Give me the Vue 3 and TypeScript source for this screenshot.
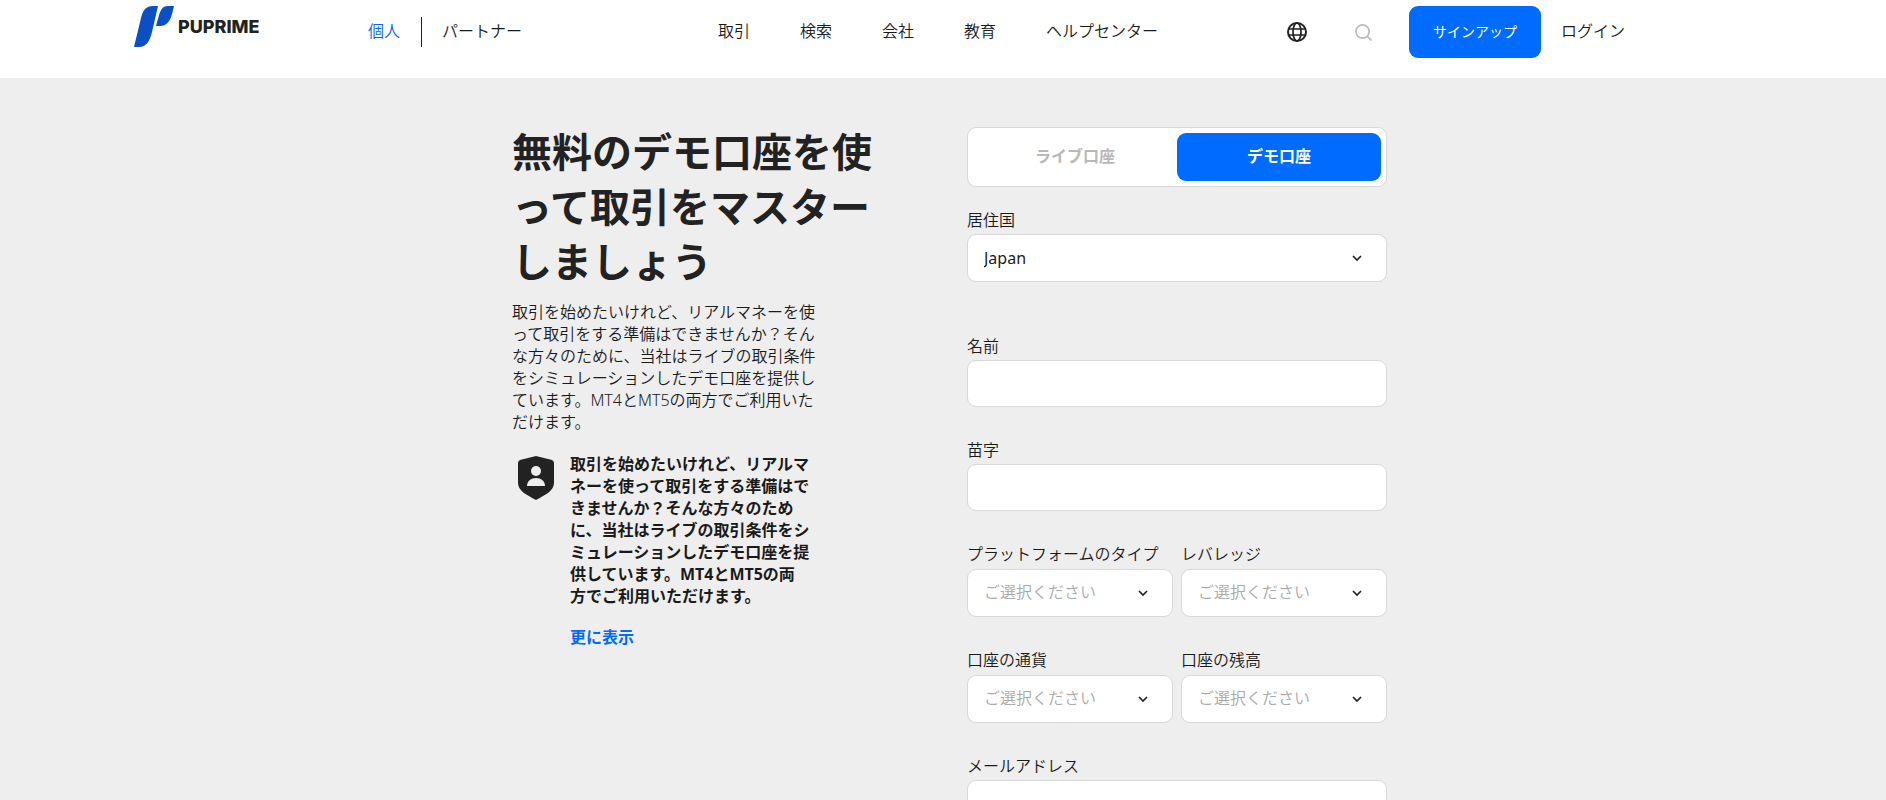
<script setup lang="ts">
import { ref } from 'vue'

interface Choice {
  id: string
  label: string
  options: string[]
}

const menu: string[] = ['取引', '検索', '会社', '教育', 'ヘルプセンター']

const names: { id: string; label: string }[] = [
  { id: 'first-name', label: '名前' },
  { id: 'last-name', label: '苗字' },
]

const choices: Choice[] = [
  { id: 'platform', label: 'プラットフォームのタイプ', options: ['MT4', 'MT5'] },
  { id: 'leverage', label: 'レバレッジ', options: ['100:1', '500:1'] },
  { id: 'currency', label: '口座の通貨', options: ['JPY', 'USD'] },
  { id: 'balance', label: '口座の残高', options: ['10000', '50000'] },
]

const account = ref<'live' | 'demo'>('demo')
const country = ref('Japan')
</script>

<template>
  <div class="page">
    <header class="header">
      <a class="logo" href="#" aria-label="PUPRIME">
        <svg class="logo-mark" viewBox="0 0 40 41" aria-hidden="true">
          <path d="M19 0H24L18 26C16 35 12 41 5 41H0L7 12C9 4 12 0 19 0Z" fill="#0a4fc4" />
          <path d="M34 0H40L38 8C36 16 32 20 26 20H22L25 9C27 3 29 0 34 0Z" fill="#0a4fc4" />
        </svg>
        <span class="logo-name">PUPRIME</span>
      </a>
      <div class="audience">
        <a class="active" href="#">個人</a>
        <a class="partner" href="#">パートナー</a>
      </div>
      <nav class="menu">
        <a v-for="item in menu" :key="item" href="#">{{ item }}</a>
      </nav>
      <div class="tools">
        <button class="icon-button" type="button" aria-label="言語">
          <svg class="globe" viewBox="0 0 20 20" fill="none" stroke="#222" stroke-width="2" aria-hidden="true">
            <circle cx="10" cy="10" r="9" />
            <ellipse cx="10" cy="10" rx="4" ry="9" stroke-width="1.7" />
            <path d="M1.5 7H18.5M1.5 13H18.5" stroke-width="1.7" />
          </svg>
        </button>
        <button class="icon-button" type="button" aria-label="サイト内検索">
          <svg class="search" viewBox="0 0 18 18" fill="none" stroke="#bbb" stroke-width="1.8" aria-hidden="true">
            <circle cx="8" cy="8" r="7" />
            <path d="M13 13L17.5 17.5" />
          </svg>
        </button>
      </div>
      <button class="signup" type="button">サインアップ</button>
      <a class="login" href="#">ログイン</a>
    </header>

    <main class="content">
      <section class="intro">
        <h1>無料のデモ口座を使って取引をマスターしましょう</h1>
        <p class="lead">取引を始めたいけれど、リアルマネーを使って取引をする準備はできませんか？そんな方々のために、当社はライブの取引条件をシミュレーションしたデモ口座を提供しています。MT4とMT5の両方でご利用いただけます。</p>
        <div class="feature">
          <svg class="shield" viewBox="0 0 36 44" aria-hidden="true">
            <path d="M18 0L34 4Q36 5 36 7V27C36 35 27 39 18 44C9 39 0 35 0 27V7Q0 5 2 4Z" fill="#222" />
            <circle cx="18" cy="15" r="5" fill="#eee" />
            <path d="M9 30C9 25 13 22 18 22S27 25 27 30Z" fill="#eee" />
          </svg>
          <div class="feature-body">
            <p>取引を始めたいけれど、リアルマネーを使って取引をする準備はできませんか？そんな方々のために、当社はライブの取引条件をシミュレーションしたデモ口座を提供しています。MT4とMT5の両方でご利用いただけます。</p>
            <a class="more" href="#">更に表示</a>
          </div>
        </div>
      </section>

      <form class="form" @submit.prevent>
        <div class="tabs">
          <button type="button" :class="{ selected: account === 'live' }" @click="account = 'live'">ライブ口座</button>
          <button type="button" :class="{ selected: account === 'demo' }" @click="account = 'demo'">デモ口座</button>
        </div>

        <div class="field country">
          <label for="country">居住国</label>
          <div class="select-box">
            <select id="country" v-model="country" class="filled">
              <option>Japan</option>
            </select>
            <svg class="chevron" viewBox="0 0 10 6" aria-hidden="true"><path d="M1 1L5 5L9 1" /></svg>
          </div>
        </div>

        <div v-for="field in names" :key="field.id" class="field">
          <label :for="field.id">{{ field.label }}</label>
          <input :id="field.id" type="text" />
        </div>

        <div class="pairs">
          <div v-for="choice in choices" :key="choice.id" class="field">
            <label :for="choice.id">{{ choice.label }}</label>
            <div class="select-box">
              <select :id="choice.id" class="empty">
                <option value="">ご選択ください</option>
                <option v-for="option in choice.options" :key="option">{{ option }}</option>
              </select>
              <svg class="chevron" viewBox="0 0 10 6" aria-hidden="true"><path d="M1 1L5 5L9 1" /></svg>
            </div>
          </div>
        </div>

        <div class="field">
          <label for="email">メールアドレス</label>
          <input id="email" type="email" />
        </div>
      </form>
    </main>
  </div>
</template>

<style>
html {
  scrollbar-width: none;
}

body {
  margin: 0;
  background: #eee;
}
</style>

<style scoped>
.page,
.page * {
  box-sizing: border-box;
}

.page {
  min-height: 100vh;
  background: #eee;
  color: #1a1a1a;
  font-family: 'Noto Sans', 'Noto Sans CJK JP', sans-serif;
  font-size: 16px;
  font-weight: 350;
  line-height: 22px;
}

a {
  color: inherit;
  text-decoration: none;
  white-space: nowrap;
}

button,
input,
select {
  font: inherit;
  color: inherit;
}

button {
  padding: 0;
  border: 0;
  background: none;
  cursor: pointer;
}

.header {
  display: flex;
  align-items: center;
  height: 78px;
  padding: 0 134px 14px;
  background: #fff;
}

.logo {
  display: flex;
  align-items: center;
  gap: 4px;
  width: 234px;
  padding-bottom: 11px;
}

.logo-mark {
  width: 40px;
  height: 41px;
}

.logo-name {
  color: #222;
  font-family: Inter, sans-serif;
  font-size: 18px;
  font-weight: 800;
}

.audience {
  display: flex;
  align-items: center;
  width: 350px;
}

.active {
  padding-bottom: 2px;
  color: #0a66f0;
}

.partner {
  margin-left: 21px;
  padding: 3px 0 5px 20px;
  border-left: 1px solid #222;
}

.menu {
  display: flex;
  gap: 50px;
  padding-bottom: 2px;
}

.tools {
  display: flex;
  gap: 48px;
  margin-left: 129px;
}

.icon-button {
  display: flex;
  align-items: center;
}

.globe {
  width: 20px;
  height: 20px;
}

.search {
  width: 17px;
  height: 17px;
}

.signup {
  width: 132px;
  height: 52px;
  margin-left: 37px;
  border-radius: 9px;
  background: #006bff;
  color: #fff;
  font-size: 14px;
  font-weight: 400;
}

.login {
  margin-left: 20px;
  padding-bottom: 2px;
}

.content {
  display: flex;
  justify-content: space-between;
  max-width: 890px;
  margin: 0 auto;
  padding: 49px 1px 40px 14px;
}

.intro {
  width: 366px;
  margin-top: -3px;
}

h1 {
  margin: 0;
  color: #222;
  font-size: 40px;
  font-weight: 700;
  line-height: 55px;
}

.lead {
  width: 310px;
  margin: 12px 0 0;
}

.feature {
  display: flex;
  gap: 16px;
  margin-top: 20px;
  padding-left: 6px;
  font-weight: 700;
}

.shield {
  flex: none;
  width: 36px;
  height: 44px;
  margin-top: 3px;
}

.feature-body {
  width: 240px;
}

.feature-body p {
  margin: 0 0 19px;
}

.more {
  color: #006bff;
}

.form {
  width: 420px;
}

.tabs {
  display: grid;
  grid-template-columns: 1fr 1fr;
  height: 60px;
  margin-bottom: 22px;
  padding: 5px;
  border: 1px solid #d8d8d8;
  border-radius: 9px;
  background: #fff;
}

.tabs button {
  padding-bottom: 2px;
  border-radius: 9px;
  color: #b8b8b8;
  font-weight: 700;
}

.tabs .selected {
  background: #006bff;
  color: #fff;
}

.field {
  margin-bottom: 32px;
}

.country {
  margin-bottom: 53px;
}

label {
  display: block;
  height: 25px;
  white-space: nowrap;
}

.pairs label {
  height: 26px;
}

input,
select {
  display: block;
  width: 100%;
  height: 48px;
  padding: 0 16px;
  border: 1px solid #d8d8d8;
  border-radius: 9px;
  background: #fff;
  appearance: none;
}

input {
  height: 47px;
}

.select-box {
  position: relative;
}

.filled {
  font-weight: 400;
}

.empty {
  padding-bottom: 2px;
  color: #aaa;
}

.chevron {
  position: absolute;
  top: 21px;
  right: 25px;
  width: 10px;
  height: 6px;
  overflow: visible;
  fill: none;
  stroke: #222;
  stroke-width: 1.7;
  pointer-events: none;
}

.pairs {
  display: grid;
  grid-template-columns: 1fr 1fr;
  column-gap: 8px;
}
</style>
